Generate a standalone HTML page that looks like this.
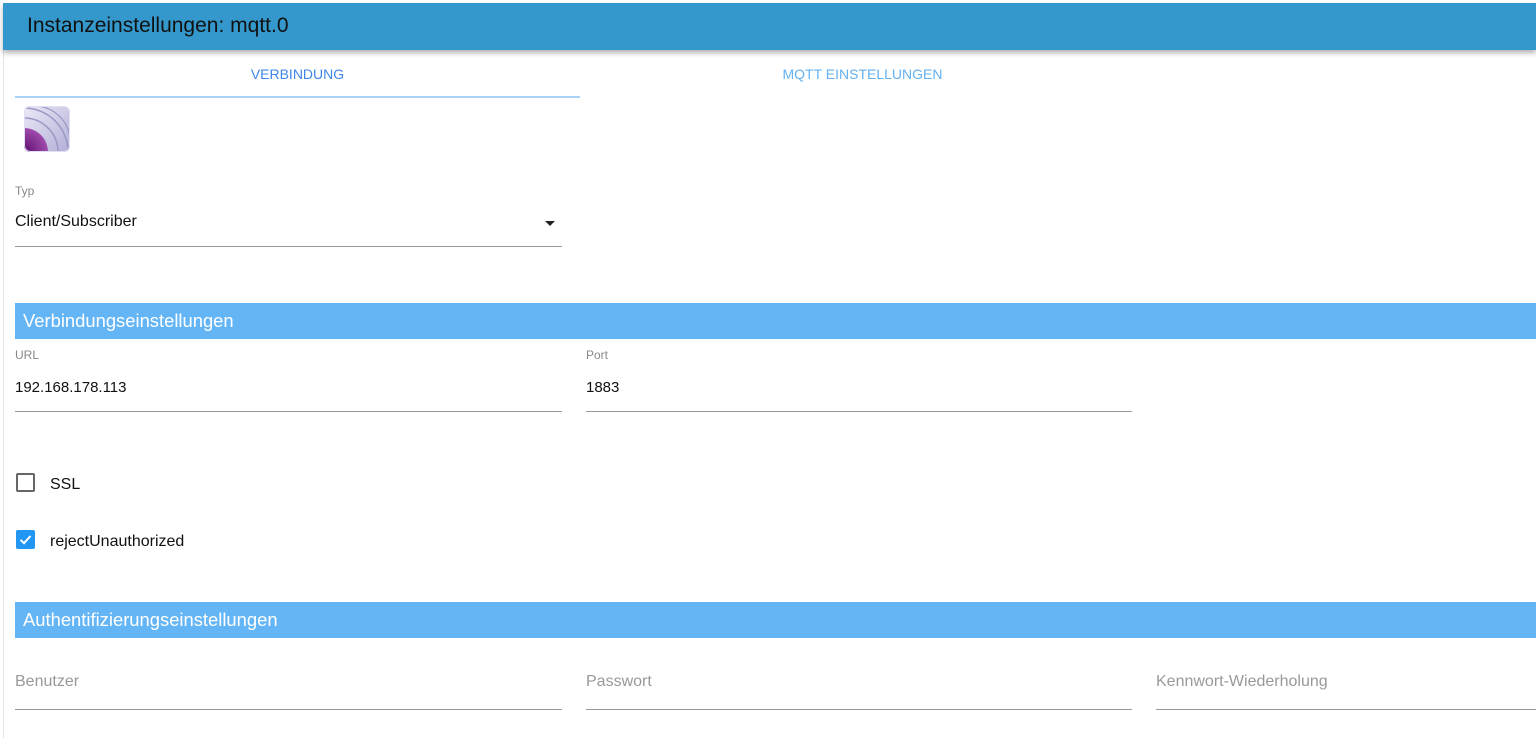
<!DOCTYPE html>
<html><head><meta charset="utf-8"><style>
*{margin:0;padding:0;box-sizing:border-box}
body{width:1536px;height:738px;overflow:hidden;background:#fff;font-family:"Liberation Sans",sans-serif;position:relative}
.a{position:absolute}
.hdr{left:3px;top:3px;width:1533px;height:47px;background:#3498cc;box-shadow:0 3px 5px rgba(0,0,0,.3);z-index:2}
.hdr span{position:absolute;left:24px;top:11px;font-size:21px;color:#111}
.lb{position:absolute;left:3px;top:50px;width:1px;height:688px;background:#e3e3e3}
.lab{font-size:12px;color:#888}
.val{font-size:15px;color:#111}
.line{height:1px;background:#999}
.bar{left:15px;width:1521px;height:36px;background:#64b5f6;color:#fff;font-size:18.4px;padding:7px 0 0 8px}
.ph{font-size:16px;color:#999}
</style></head><body>
<div class="a hdr"><span>Instanzeinstellungen: mqtt.0</span></div>
<div class="lb"></div>
<div class="a" style="left:15px;top:66px;width:565px;text-align:center;font-size:14px;color:#3f86e8">VERBINDUNG</div>
<div class="a" style="left:580px;top:66px;width:565px;text-align:center;font-size:14px;color:#64b0f0">MQTT EINSTELLUNGEN</div>
<div class="a" style="left:15px;top:96px;width:565px;height:2px;background:#a8d3f6"></div>
<svg class="a" style="left:24px;top:106px" width="46" height="46" viewBox="0 0 46 46">
<defs><linearGradient id="g" x1="0" y1="0" x2="1" y2="1"><stop offset="0" stop-color="#ebe9f6"/><stop offset="1" stop-color="#b0aed6"/></linearGradient>
<radialGradient id="p" cx="0" cy="46" r="24" gradientUnits="userSpaceOnUse"><stop offset="0" stop-color="#5a0f6e"/><stop offset="1" stop-color="#a04aae"/></radialGradient>
<clipPath id="c"><rect width="46" height="46" rx="6"/></clipPath></defs>
<g clip-path="url(#c)">
<rect width="46" height="46" fill="url(#g)"/>
<path d="M0 22 A24 24 0 0 1 24 46 L0 46Z" fill="url(#p)"/>
<path d="M0 12 A34 34 0 0 1 34 46" fill="none" stroke="#9b98c4" stroke-width="1.5"/>
<path d="M0 2 A44 44 0 0 1 44 46" fill="none" stroke="#9b98c4" stroke-width="1.5"/>
<path d="M12 0 A36 36 0 0 1 46 32" fill="none" stroke="#9b98c4" stroke-width="1.2"/>
</g>
<rect x="0.5" y="0.5" width="45" height="45" rx="6" fill="none" stroke="#e0def0"/>
</svg>
<div class="a lab" style="left:15px;top:184px">Typ</div>
<div class="a val" style="left:15px;top:213px;font-size:16px">Client/Subscriber</div>
<div class="a" style="left:545px;top:221px;border-left:5px solid transparent;border-right:5px solid transparent;border-top:5px solid #222"></div>
<div class="a line" style="left:15px;top:246px;width:547px"></div>
<div class="a bar" style="top:303px">Verbindungseinstellungen</div>
<div class="a lab" style="left:15px;top:348px">URL</div>
<div class="a val" style="left:15px;top:379px">192.168.178.113</div>
<div class="a line" style="left:15px;top:411px;width:547px"></div>
<div class="a lab" style="left:586px;top:348px">Port</div>
<div class="a val" style="left:586px;top:379px">1883</div>
<div class="a line" style="left:586px;top:411px;width:546px"></div>
<div class="a" style="left:16px;top:473px;width:19px;height:19px;border:2px solid #666;border-radius:2px"></div>
<div class="a val" style="left:50px;top:476px;font-size:16px">SSL</div>
<div class="a" style="left:16px;top:530px;width:19px;height:19px;background:#2196f3;border-radius:2px"></div>
<svg class="a" style="left:16px;top:530px" width="19" height="19"><path d="M4.5 9.8 L8 13.2 L14.5 6" fill="none" stroke="#fff" stroke-width="2"/></svg>
<div class="a val" style="left:50px;top:533px;font-size:16px">rejectUnauthorized</div>
<div class="a bar" style="top:602px">Authentifizierungseinstellungen</div>
<div class="a ph" style="left:15px;top:673px">Benutzer</div>
<div class="a line" style="left:15px;top:709px;width:547px"></div>
<div class="a ph" style="left:586px;top:673px">Passwort</div>
<div class="a line" style="left:586px;top:709px;width:546px"></div>
<div class="a ph" style="left:1156px;top:673px">Kennwort-Wiederholung</div>
<div class="a line" style="left:1156px;top:709px;width:380px"></div>
</body></html>
